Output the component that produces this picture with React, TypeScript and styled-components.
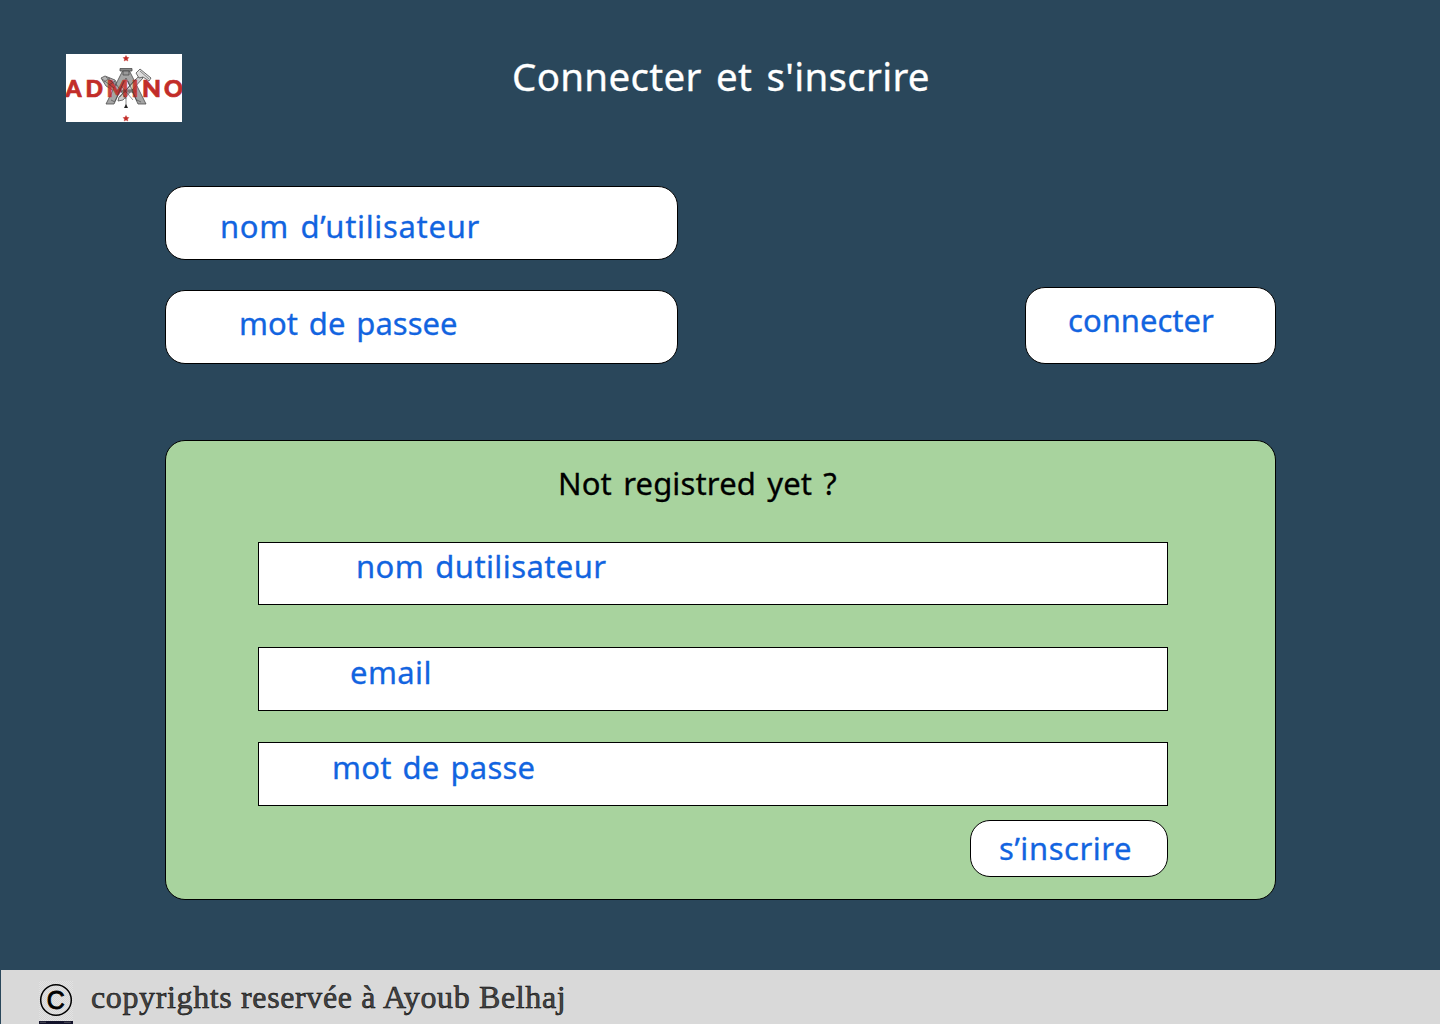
import React from "react";
import styled, { createGlobalStyle } from "styled-components";

const GlobalStyle = createGlobalStyle`
  *, *::before, *::after { box-sizing: border-box; }
  html, body { margin: 0; padding: 0; background: #2a475b; }
`;

const Page = styled.div`
  width: 1440px;
  height: 1024px;
  display: flex;
  flex-direction: column;
  overflow: hidden;
  background: #2a475b;
  font-family: "Noto Sans", "Open Sans", sans-serif;
`;

const Header = styled.header`
  display: flex;
  align-items: flex-start;
  height: 186px;
  padding: 51px 0 0 66px;
`;

const Logo = styled.svg`
  display: block;
  flex: none;
  width: 116px;
  height: 68px;
  margin-top: 3px;
  background: #fff;
`;

const Title = styled.h1`
  margin: 0 0 0 330px;
  font-size: 38.5px;
  font-weight: 400;
  line-height: 50px;
  letter-spacing: 0.3px;
  word-spacing: 4px;
  white-space: nowrap;
  color: #fff;
  -webkit-text-stroke: 0.3px currentColor;
`;

const Label = styled.span<{ $spacing: number }>`
  display: block;
  font-size: 31px;
  line-height: 40px;
  letter-spacing: ${(p) => p.$spacing}px;
  word-spacing: 2.8px;
  white-space: nowrap;
  color: #1264e0;
  -webkit-text-stroke: 0.3px currentColor;
`;

const LoginRow = styled.section`
  display: flex;
  justify-content: space-between;
  align-items: flex-end;
  width: 1111px;
  height: 178px;
  margin-left: 165px;
`;

const LoginFields = styled.div`
  display: flex;
  flex-direction: column;
  gap: 30px;
`;

const RoundedField = styled.div<{ $top: number; $left: number }>`
  width: 513px;
  height: 74px;
  padding: ${(p) => p.$top}px 0 0 ${(p) => p.$left}px;
  border: 1px solid #000;
  border-radius: 20px;
  background: #fff;
`;

const Button = styled.button<{ $w: number; $h: number; $top: number; $left: number }>`
  display: flex;
  align-items: flex-start;
  width: ${(p) => p.$w}px;
  height: ${(p) => p.$h}px;
  padding: ${(p) => p.$top}px 0 0 ${(p) => p.$left}px;
  border: 1px solid #000;
  border-radius: 20px;
  background: #fff;
  font-family: inherit;
`;

const Panel = styled.section`
  display: flex;
  flex-direction: column;
  width: 1111px;
  height: 460px;
  margin: 76px 0 0 165px;
  padding: 22px 107px 0 92px;
  border: 1px solid #000;
  border-radius: 20px;
  background: #a8d39e;
`;

const PanelTitle = styled.h2`
  margin: 0 0 39px 300px;
  font-size: 31px;
  font-weight: 400;
  line-height: 40px;
  letter-spacing: 0.15px;
  word-spacing: 3px;
  white-space: nowrap;
  color: #000;
  -webkit-text-stroke: 0.3px currentColor;
`;

const Field = styled.div<{ $h: number; $gap: number; $top: number; $left: number }>`
  width: 910px;
  height: ${(p) => p.$h}px;
  margin-bottom: ${(p) => p.$gap}px;
  padding: ${(p) => p.$top}px 0 0 ${(p) => p.$left}px;
  border: 1px solid #000;
  background: #fff;
`;

const Actions = styled.div`
  display: flex;
  justify-content: flex-end;
`;

const Footer = styled.footer`
  display: flex;
  align-items: flex-start;
  height: 54px;
  margin: 70px 0 0 1px;
  padding: 11px 0 0 38px;
  background: #d9d9d9;
`;

const CopyrightMark = styled.svg`
  display: block;
  flex: none;
  width: 34px;
  height: 43px;
`;

const FooterText = styled.p`
  margin: -3px 0 0 18px;
  font-family: "Liberation Serif", serif;
  font-size: 32px;
  line-height: 38px;
  letter-spacing: 0.63px;
  white-space: nowrap;
  color: #444;
  -webkit-text-stroke: 0.5px #000;
`;

const Star = ({ y }: { y: number }) => (
  <path
    transform={`translate(60 ${y})`}
    d="M0-3 .9-1.200 2.900-.9 1.500.6 1.800 2.500 0 1.600-1.800 2.500-1.500.6-2.900-.9-.9-1.200Z"
    fill="#c22d29"
    stroke="#c22d29"
    strokeWidth=".4"
  />
);

const wordmark = [
  { letter: "A", x: -0.5, width: 16 },
  { letter: "D", x: 19.5, width: 17.5 },
  { letter: "M", x: 40.5, width: 22 },
  { letter: "I", x: 65.5, width: 7 },
  { letter: "N", x: 76, width: 19 },
  { letter: "O", x: 98, width: 19 },
];

const AdminoLogo = () => (
  <Logo viewBox="0 0 116 68" role="img" aria-label="Admino">
    <g stroke="#4c4c4c" strokeWidth=".8" fill="#b5b5b5">
      <path d="M35 24l4-2 10 4 4 7-5 4-8-5Z" />
      <path d="M57 16h6l17 34h-8L60 24 48 50h-8Z" fill="#a5a5a5" />
      <path d="M54 14.500h12v2.500H54Z" fill="#888" />
      <path d="M57 17h6v4h-6Z" fill="#999" />
      <path d="M74 21l3 3-20 22-5 1 1-4Z" fill="#ccc" />
      <path d="M70 19l4-4 11 9-2 3-6-4-4 1Z" fill="#ddd" />
      <path d="M51 36h18l1 2H50Z" fill="#999" />
    </g>
    <path d="M60 37v16" stroke="#555" strokeWidth=".7" />
    <path d="M60 50l2 4h-4Z" fill="#222" />
    <g
      fill="#c22d29"
      stroke="#c22d29"
      strokeWidth=".7"
      fontFamily="Lato, sans-serif"
      fontWeight="900"
      fontSize="23.500"
    >
      {wordmark.map(({ letter, x, width }) => (
        <text
          key={letter}
          x={x}
          y="43"
          textLength={width}
          lengthAdjust="spacingAndGlyphs"
          opacity={letter === "M" || letter === "I" ? 0.88 : 1}
        >
          {letter}
        </text>
      ))}
    </g>
    <g fill="none" stroke="#333" strokeWidth=".8" opacity=".65">
      <path d="M48 27l7 10 5 8M58 27l-9 20M62 27l9 20M70 25L54 43M55 32l12 14" />
      <path d="M36 25l12 9M40 23l11 9M38 28l6-4M43 31l6-4M74 17l9 8M45 46l4 2M71 46l4 2" />
    </g>
    <Star y={4.5} />
    <Star y={64.5} />
  </Logo>
);

const Copyright = () => (
  <CopyrightMark viewBox="0 0 34 43" aria-label="Copyright">
    <defs>
      <pattern id="checks" width="2" height="2" patternUnits="userSpaceOnUse">
        <path d="M0 0h2v2H0Z" fill="#e3e3e3" />
        <path d="M0 0h1v1H0ZM1 1h1v1H1Z" fill="#d5d5d5" />
      </pattern>
    </defs>
    <path d="M0 0h34v40H0Z" fill="url(#checks)" />
    <circle cx="17" cy="19" r="15.300" fill="none" stroke="#000" strokeWidth="1.500" />
    <text
      x="16.800"
      y="28.300"
      textAnchor="middle"
      fontFamily="Liberation Sans, sans-serif"
      fontWeight="400"
      fontSize="26"
      textLength="18"
      lengthAdjust="spacingAndGlyphs"
      stroke="#000"
      strokeWidth=".9"
    >
      C
    </text>
    <path d="M0 40h34v3H0Z" fill="#12122a" />
    <path d="M1 41.300h6M25 41.300h7" stroke="#777" strokeWidth=".6" />
  </CopyrightMark>
);

export default function App() {
  return (
    <>
      <GlobalStyle />
      <Page>
        <Header>
          <AdminoLogo />
          <Title>Connecter et s'inscrire</Title>
        </Header>
        <LoginRow>
          <LoginFields>
            <RoundedField $top={19} $left={54}>
              <Label $spacing={0.67}>nom d’utilisateur</Label>
            </RoundedField>
            <RoundedField $top={12} $left={73}>
              <Label $spacing={0.02}>mot de passee</Label>
            </RoundedField>
          </LoginFields>
          <Button $w={251} $h={77} $top={12} $left={42}>
            <Label $spacing={0}>connecter</Label>
          </Button>
        </LoginRow>
        <Panel>
          <PanelTitle>Not registred yet ?</PanelTitle>
          <Field $h={63} $gap={42} $top={3} $left={97}>
            <Label $spacing={0.4}>nom dutilisateur</Label>
          </Field>
          <Field $h={64} $gap={31} $top={4} $left={91}>
            <Label $spacing={0.4}>email</Label>
          </Field>
          <Field $h={64} $gap={14} $top={4} $left={73}>
            <Label $spacing={0.2}>mot de passe</Label>
          </Field>
          <Actions>
            <Button $w={198} $h={57} $top={7} $left={28}>
              <Label $spacing={0.55}>s’inscrire</Label>
            </Button>
          </Actions>
        </Panel>
        <Footer>
          <Copyright />
          <FooterText>copyrights reservée à Ayoub Belhaj</FooterText>
        </Footer>
      </Page>
    </>
  );
}
